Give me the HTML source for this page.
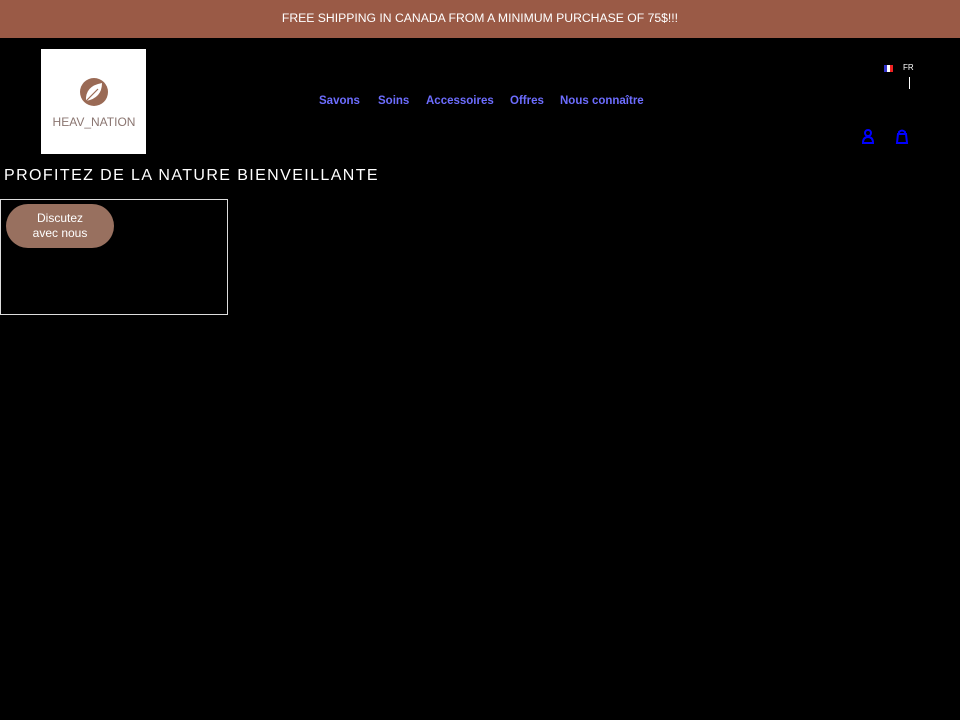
<!DOCTYPE html>
<html><head><meta charset="utf-8"><style>
body{margin:0;width:960px;height:720px;background:#000;font-family:"Liberation Sans",sans-serif;position:relative;overflow:hidden}
.bar{position:absolute;left:0;top:0;width:960px;height:38px;background:#9a5a46;color:#fff;font-size:12.2px;text-align:center;line-height:37px}
.logo{position:absolute;left:41px;top:49px;width:105px;height:105px;background:#fff}
.nav{position:absolute;top:95px;left:319px;font-size:11.5px;color:#6d6dff;font-weight:bold}
.nav span{position:absolute;white-space:nowrap}
.hero{position:absolute;left:4px;top:167px;color:#fff;font-size:16px;letter-spacing:1.4px}
.box{position:absolute;left:0;top:199px;width:226px;height:114px;border:1px solid #ddd}
.btn{position:absolute;left:6px;top:204px;width:108px;height:44px;border-radius:22px;background:#98705f;color:#fff;font-size:12px;text-align:center;line-height:15px;padding-top:7px;box-sizing:border-box}
</style></head><body>
<div class="bar">FREE SHIPPING IN CANADA FROM A MINIMUM PURCHASE OF 75$!!!</div>
<div class="logo">
<svg width="105" height="105"><circle cx="53" cy="43" r="14" fill="#9a6a55"/><path d="M45 52 Q44 37 61 34 Q61 49 45 52Z" fill="#fff"/><path d="M45 52 L57 40" stroke="#9a6a55" stroke-width="1.2"/>
<text x="53" y="77" font-size="12" fill="#8a7570" text-anchor="middle" font-family="Liberation Sans">HEAV_NATION</text></svg>
</div>
<div class="nav"><span style="left:0">Savons</span><span style="left:59px">Soins</span><span style="left:107px">Accessoires</span><span style="left:191px">Offres</span><span style="left:241px">Nous connaître</span></div>
<div style="position:absolute;left:884px;top:65px;width:9px;height:7px;background:linear-gradient(90deg,#33c 33%,#fff 33% 66%,#e22 66%)"></div>
<div style="position:absolute;left:903px;top:63px;color:#fff;font-size:8px">FR</div>
<div style="position:absolute;left:909px;top:77px;width:1px;height:12px;background:#fff"></div>
<svg style="position:absolute;left:860px;top:128px" width="16" height="18"><circle cx="8" cy="5" r="3" fill="none" stroke="#00f" stroke-width="2"/><path d="M3 15 Q3 9 8 9 Q13 9 13 15 Z" fill="none" stroke="#00f" stroke-width="2"/></svg>
<svg style="position:absolute;left:894px;top:128px" width="16" height="18"><path d="M5 6 V4 Q8 1 11 4 V6 M3 15 L4 6 H12 L13 15 Z" fill="none" stroke="#00f" stroke-width="2"/></svg>
<div class="hero">PROFITEZ DE LA NATURE BIENVEILLANTE</div>
<div class="box"></div>
<div class="btn">Discutez<br>avec nous</div>
</body></html>
